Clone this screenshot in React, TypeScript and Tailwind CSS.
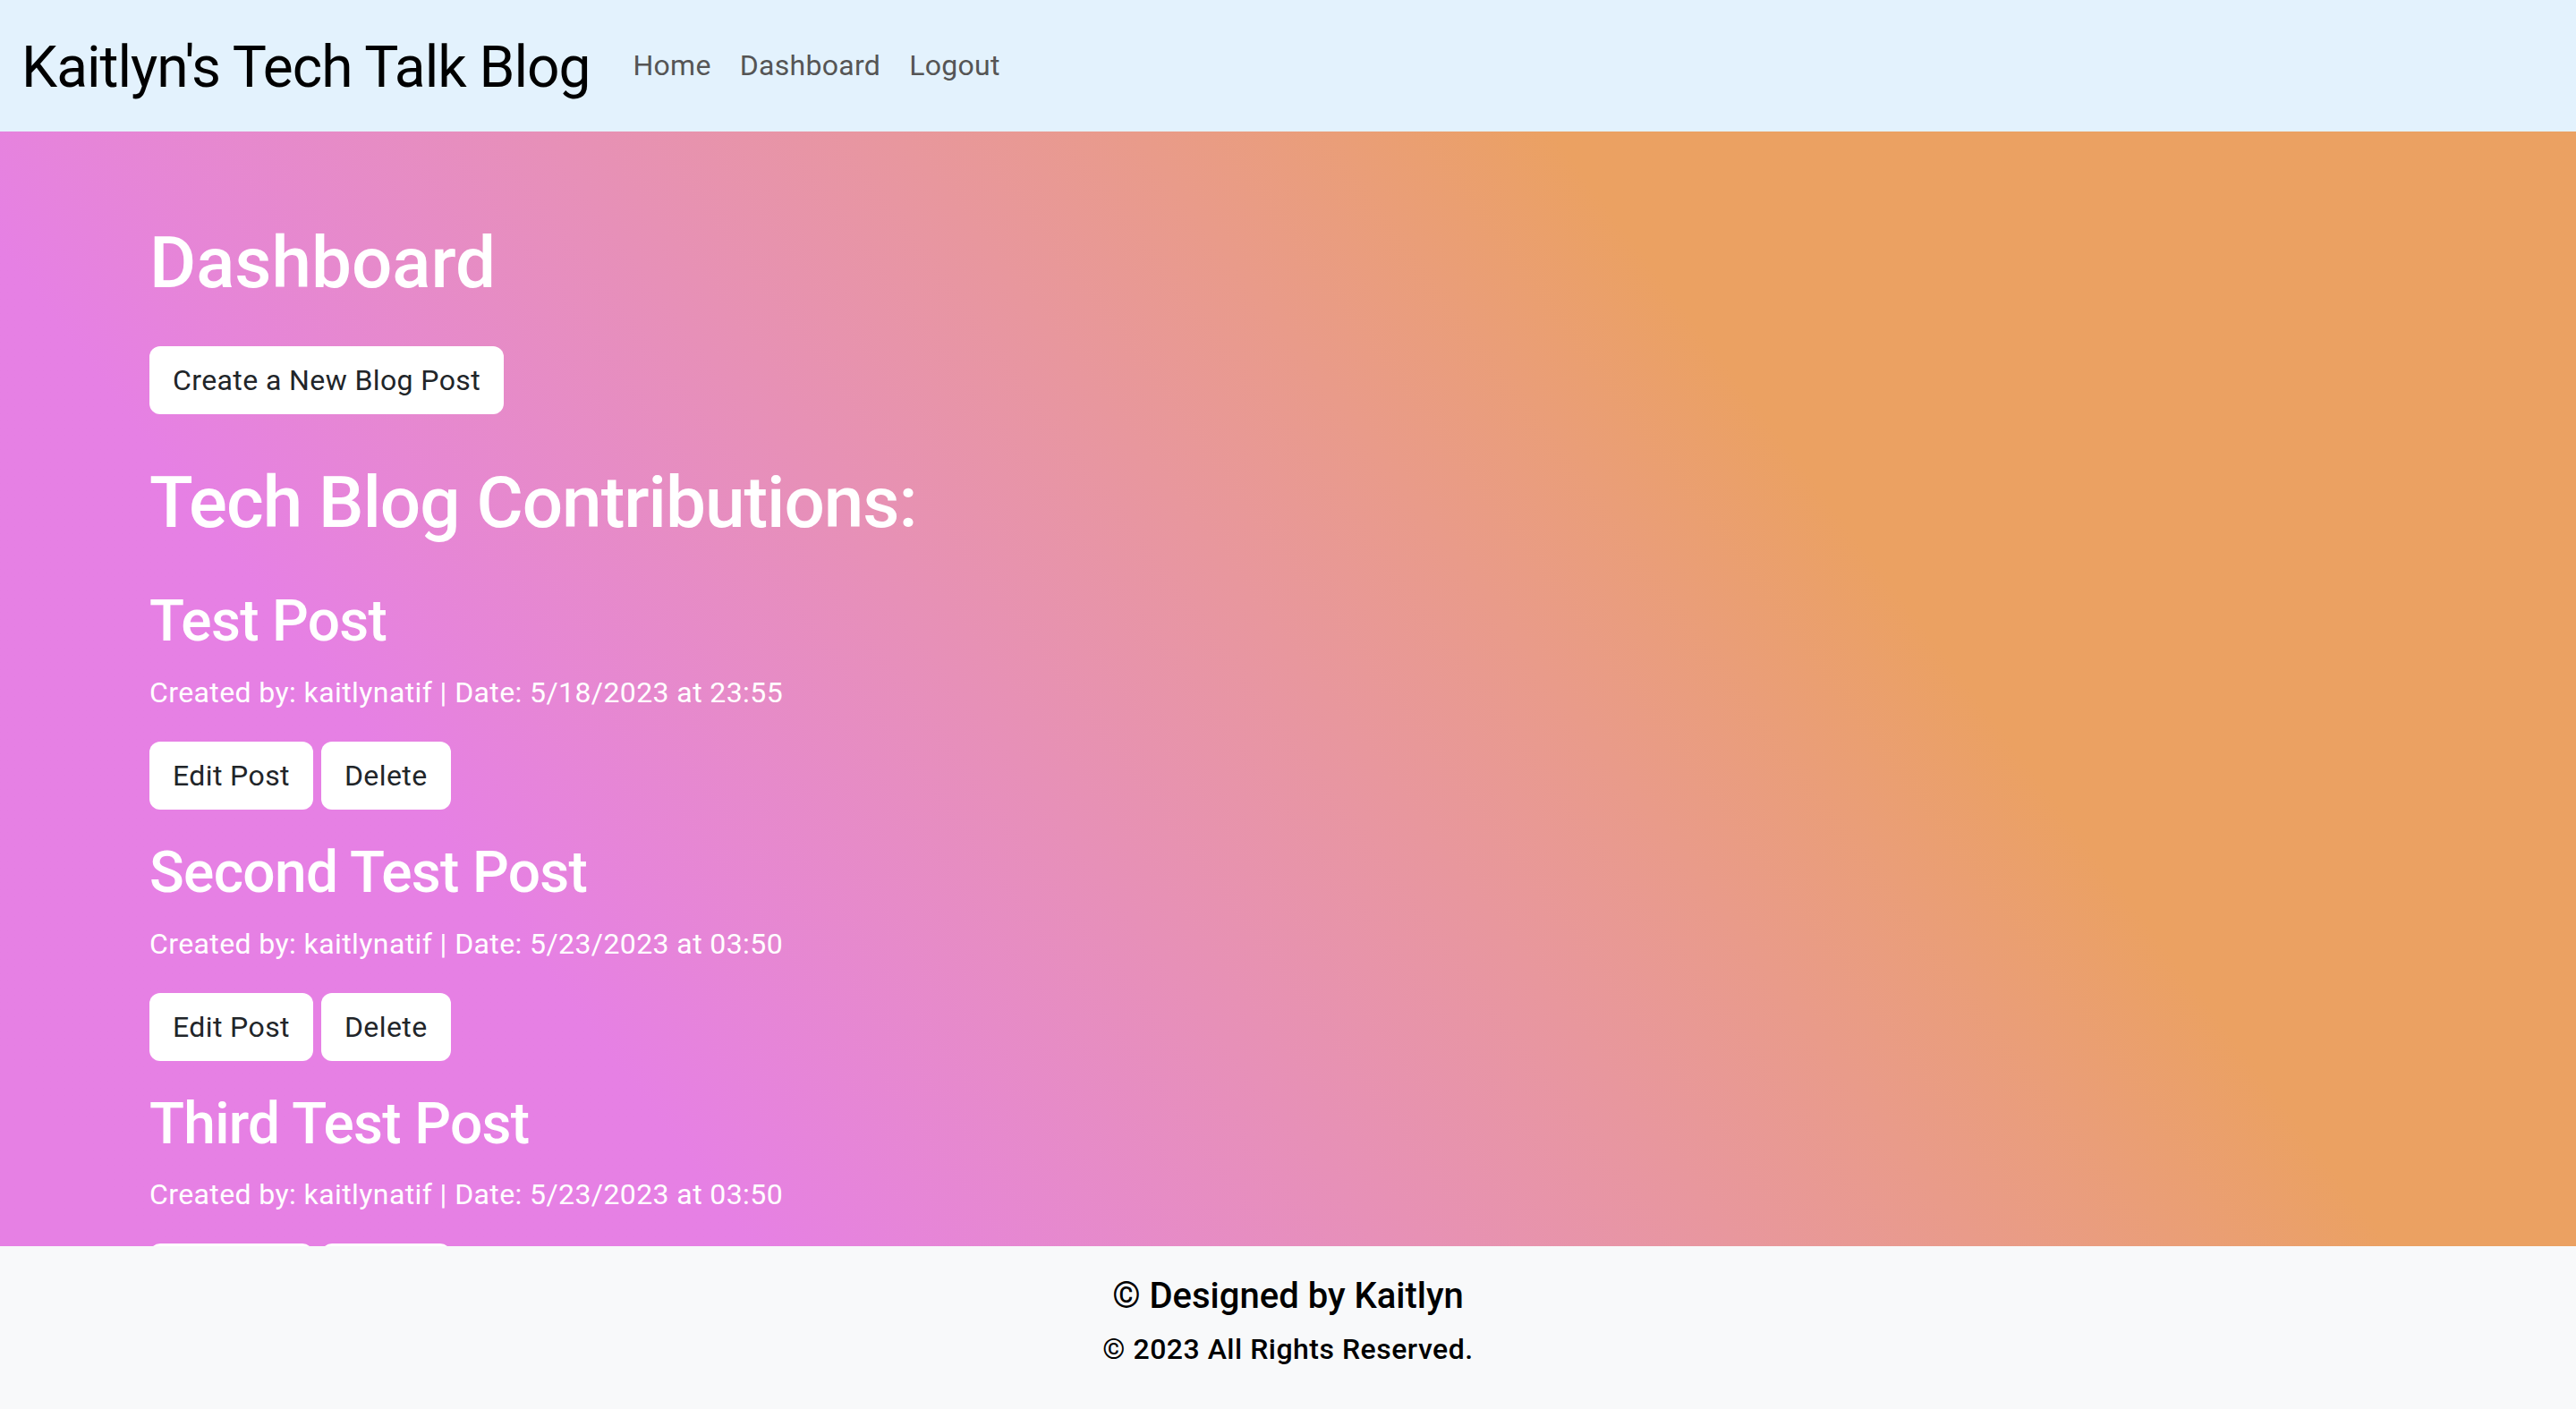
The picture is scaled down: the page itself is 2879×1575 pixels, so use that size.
const posts = [
  { title: "Test Post", author: "kaitlynatif", date: "5/18/2023 at 23:55" },
  { title: "Second Test Post", author: "kaitlynatif", date: "5/23/2023 at 03:50" },
  { title: "Third Test Post", author: "kaitlynatif", date: "5/23/2023 at 03:50" },
];

const btn =
  "bg-white text-[#212529] text-[32px] leading-[1.5] tracking-[0.4px] py-[12px] px-[24px] border-2 border-transparent rounded-[12px]";

const App = () => {
  return (
    <div className="h-screen flex flex-col overflow-hidden font-['Roboto',sans-serif]">
      <nav className="h-[147px] shrink-0 bg-[#e3f2fd] flex items-start pl-6">
        <a href="#" className="mt-[38px] mr-8 text-[64px] leading-[1.2] tracking-[-1px] text-black">
          Kaitlyn's Tech Talk Blog
        </a>
        <div className="flex mt-[49px]">
          <a href="#" className="px-4 text-[32px] leading-[1.5] tracking-[0.3px] text-[#555]">
            Home
          </a>
          <a href="#" className="px-4 text-[32px] leading-[1.5] tracking-[0.3px] text-[#555]">
            Dashboard
          </a>
          <a href="#" className="px-4 text-[32px] leading-[1.5] tracking-[0.3px] text-[#555]">
            Logout
          </a>
        </div>
      </nav>

      <main className="flex-1 min-h-0 overflow-hidden bg-linear-53 from-[#e680e4] from-22% to-[#eba162] to-70% pl-[167px] pt-[99px] text-white">
        <h1 className="text-[80px] leading-[1.2] font-medium mb-[45px]">Dashboard</h1>
        <button className={btn}>Create a New Blog Post</button>
        <h1 className="text-[80px] leading-[1.2] font-medium tracking-[-1px] mt-[51px] mb-[47px]">
          Tech Blog Contributions:
        </h1>
        {posts.map((p) => (
          <div key={p.title}>
            <h2 className="text-[64px] leading-[1.2] font-medium tracking-[-0.7px] mb-4">{p.title}</h2>
            <p className="text-[32px] leading-[1.5] tracking-[0.4px] mb-[31px]">
              Created by: {p.author} | Date: {p.date}
            </p>
            <div className="flex gap-[9px] mb-[33px]">
              <button className={btn}>Edit Post</button>
              <button className={btn}>Delete</button>
            </div>
          </div>
        ))}
      </main>

      <footer className="h-[182px] shrink-0 bg-[#f8f9fa] text-black text-center pt-8">
        <h5 className="text-[40px] leading-[1.2] font-medium mb-[11px]">© Designed by Kaitlyn</h5>
        <p className="text-[32px] leading-[1.5] font-medium tracking-[0.5px]">© 2023 All Rights Reserved.</p>
      </footer>
    </div>
  );
};

export default App;
